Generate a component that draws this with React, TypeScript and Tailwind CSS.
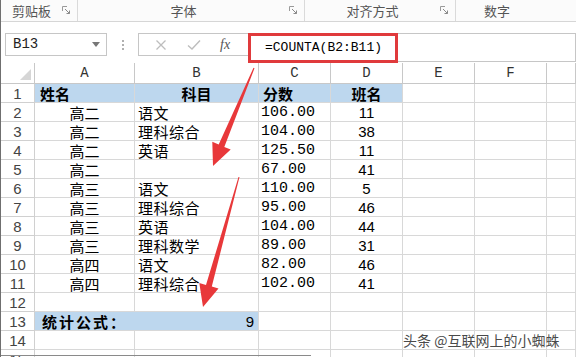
import React from 'react';

const cjk = { fontFamily: '"Noto Sans CJK SC", "Noto Sans", sans-serif' };
const mono = { fontFamily: '"Liberation Mono", "DejaVu Sans Mono", monospace' };
const sans = { fontFamily: '"Liberation Sans", Arial, sans-serif' };

const rows = [
  ['高二', '语文', '106.00', '11'],
  ['高二', '理科综合', '104.00', '38'],
  ['高二', '英语', '125.50', '11'],
  ['高二', '', '67.00', '41'],
  ['高三', '语文', '110.00', '5'],
  ['高三', '理科综合', '95.00', '46'],
  ['高三', '英语', '104.00', '44'],
  ['高三', '理科数学', '89.00', '31'],
  ['高四', '语文', '82.00', '46'],
  ['高四', '理科综合', '102.00', '41'],
];

const cols = ['A', 'B', 'C', 'D', 'E', 'F', ''];
const gridCols = 'grid grid-cols-[34px_100px_124px_72px_72px_72px_72px_1fr]';

function Launcher() {
  return (
    <svg width="9" height="9" viewBox="0 0 9 9" className="shrink-0">
      <path d="M0.5 0.5 H5 M0.5 0.5 V5" stroke="#9a9a9a" fill="none" />
      <path d="M3 3 L7.5 7.5 M4.5 7.5 H7.5 V4.5" stroke="#8a8a8a" fill="none" />
    </svg>
  );
}

function RibbonGroup({ label, width, launcher = true }: { label: string; width: string; launcher?: boolean }) {
  return (
    <div className={`${width} flex items-center h-full border-r border-[#dadada] pr-[6px]`}>
      <span className="flex-1 text-center text-[13px] text-[#555]" style={cjk}>{label}</span>
      {launcher && <Launcher />}
    </div>
  );
}

function Cell({ children, className = '', style }: { children?: React.ReactNode; className?: string; style?: React.CSSProperties }) {
  return (
    <div className={`h-[19px] border-r border-b border-[#d8d8d8] whitespace-nowrap leading-[19px] text-[15px] text-black ${className}`} style={style}>
      {children}
    </div>
  );
}

function RowHead({ n }: { n: number }) {
  return (
    <div className="h-[19px] border-r border-b border-[#d0d0d0] text-center leading-[19px] text-[15px] text-[#444]" style={sans}>
      {n}
    </div>
  );
}

export default function App() {
  return (
    <div className="relative w-[576px] h-[357px] overflow-hidden bg-white border-l border-[#6f6f6f]">
      {/* ribbon group labels */}
      <div className="flex h-[22px] border-b border-[#d6d6d6] bg-[#fbfbfb]">
        <RibbonGroup label="剪贴板" width="w-[77px]" />
        <RibbonGroup label="字体" width="w-[227px]" />
        <RibbonGroup label="对齐方式" width="w-[151px]" />
        <div className="w-[82px] flex items-center justify-center text-[13px] text-[#555]" style={cjk}>数字</div>
      </div>

      {/* formula bar */}
      <div className="flex items-start h-[41px] pt-[11px] pl-[4px]">
        <div className="w-[102px] h-[23px] border border-[#c6c6c6] flex items-center justify-between pl-[7px] pr-[6px]">
          <span className="text-[14px] text-[#222]" style={mono}>B13</span>
          <svg width="8" height="5" viewBox="0 0 8 5"><path d="M0 0 H8 L4 5 Z" fill="#777" /></svg>
        </div>
        <div className="w-[31px] h-[23px] flex flex-col items-center justify-center gap-[2px]">
          <span className="w-[2px] h-[2px] bg-[#b0b0b0]" />
          <span className="w-[2px] h-[2px] bg-[#b0b0b0]" />
          <span className="w-[2px] h-[2px] bg-[#b0b0b0]" />
        </div>
        <div className="w-[110px] h-[23px] border border-r-0 border-[#c6c6c6] flex items-center">
          <svg width="12" height="12" viewBox="0 0 12 12" className="ml-[16px]">
            <path d="M1.5 1.5 L10.5 10.5 M10.5 1.5 L1.5 10.5" stroke="#bdbdbd" strokeWidth="1.3" />
          </svg>
          <svg width="14" height="12" viewBox="0 0 14 12" className="ml-[20px]">
            <path d="M1 6.5 L5 10 L13 1.5" stroke="#bdbdbd" strokeWidth="1.4" fill="none" />
          </svg>
          <span className="ml-[19px] text-[14px] italic text-[#555]" style={{ fontFamily: '"Liberation Serif", serif' }}>fx</span>
        </div>
        <div className="relative flex-1 h-[29px] border border-[#c6c6c6] flex items-center pl-[16px]">
          <span className="text-[13px] text-black" style={mono}>=COUNTA(B2:B11)</span>
          <div className="absolute left-[-1px] top-[-1px] w-[150px] h-[30px] border-[3px] border-[#e03a3c]" />
        </div>
      </div>

      {/* sheet grid */}
      <div className={gridCols}>
        <div className="h-[21px] border-r border-b border-[#c8c8c8] flex items-end justify-end pr-[3px] pb-[3px]">
          <svg width="11" height="11" viewBox="0 0 11 11"><path d="M11 0 V11 H0 Z" fill="#d6d6d6" /></svg>
        </div>
        {cols.map((c, i) => (
          <div key={i} className="h-[21px] border-r border-b border-[#c8c8c8] text-center leading-[21px] text-[14px] text-[#333]" style={mono}>
            {c}
          </div>
        ))}

        <RowHead n={1} />
        <Cell className="bg-[#bdd7ee] font-bold pl-[5px]" style={cjk}>姓名</Cell>
        <Cell className="bg-[#bdd7ee] font-bold text-center" style={cjk}>科目</Cell>
        <Cell className="bg-[#bdd7ee] font-bold pl-[4px]" style={cjk}>分数</Cell>
        <Cell className="bg-[#bdd7ee] font-bold text-center" style={cjk}>班名</Cell>
        <Cell /><Cell /><Cell />

        {rows.map((r, i) => (
          <React.Fragment key={i}>
            <RowHead n={i + 2} />
            <Cell className="text-center" style={cjk}>{r[0]}</Cell>
            <Cell className="pl-[3px] tracking-[0.5px]" style={cjk}>{r[1]}</Cell>
            <Cell className="pl-[2px]" style={mono}>{r[2]}</Cell>
            <Cell className="text-center" style={sans}>{r[3]}</Cell>
            <Cell /><Cell /><Cell />
          </React.Fragment>
        ))}

        <RowHead n={12} />
        <Cell /><Cell /><Cell /><Cell /><Cell /><Cell /><Cell />

        <RowHead n={13} />
        <Cell className="bg-[#bdd7ee] border-r-0 font-bold pl-[7px] tracking-[2px]" style={cjk}>统计公式：</Cell>
        <Cell className="bg-[#bdd7ee] text-right pr-[4px]" style={sans}>9</Cell>
        <Cell /><Cell /><Cell /><Cell /><Cell />

        <RowHead n={14} />
        <Cell /><Cell /><Cell /><Cell /><Cell /><Cell /><Cell />

        <RowHead n={15} />
        <Cell /><Cell /><Cell /><Cell /><Cell /><Cell /><Cell />
      </div>

      {/* sheet tab strip edge */}
      <div className="absolute left-0 bottom-[1px] w-[310px] h-[1px] bg-[#8a8a8a]" />

      {/* red annotation arrows */}
      <svg className="absolute inset-0 pointer-events-none" width="576" height="357" viewBox="0 0 576 357">
        <polygon
          points="253.5,68.2 223.3,146.9 229.7,149.6 212,166 211.3,141.8 217.7,144.5 252.5,67.8"
          fill="#e8383a"
        />
        <polygon
          points="238.5,177.1 210.8,286.6 217.5,288.5 202,307 198.3,283.1 205,285 237.5,176.9"
          fill="#e8383a"
        />
      </svg>

      {/* watermark */}
      <div
        className="absolute left-[402px] top-[330px] text-[14px] text-[#4a4a4a] whitespace-nowrap"
        style={{ ...cjk, textShadow: '0 0 2px #fff, 0 0 2px #fff' }}
      >
        头条 @互联网上的小蜘蛛
      </div>
    </div>
  );
}
